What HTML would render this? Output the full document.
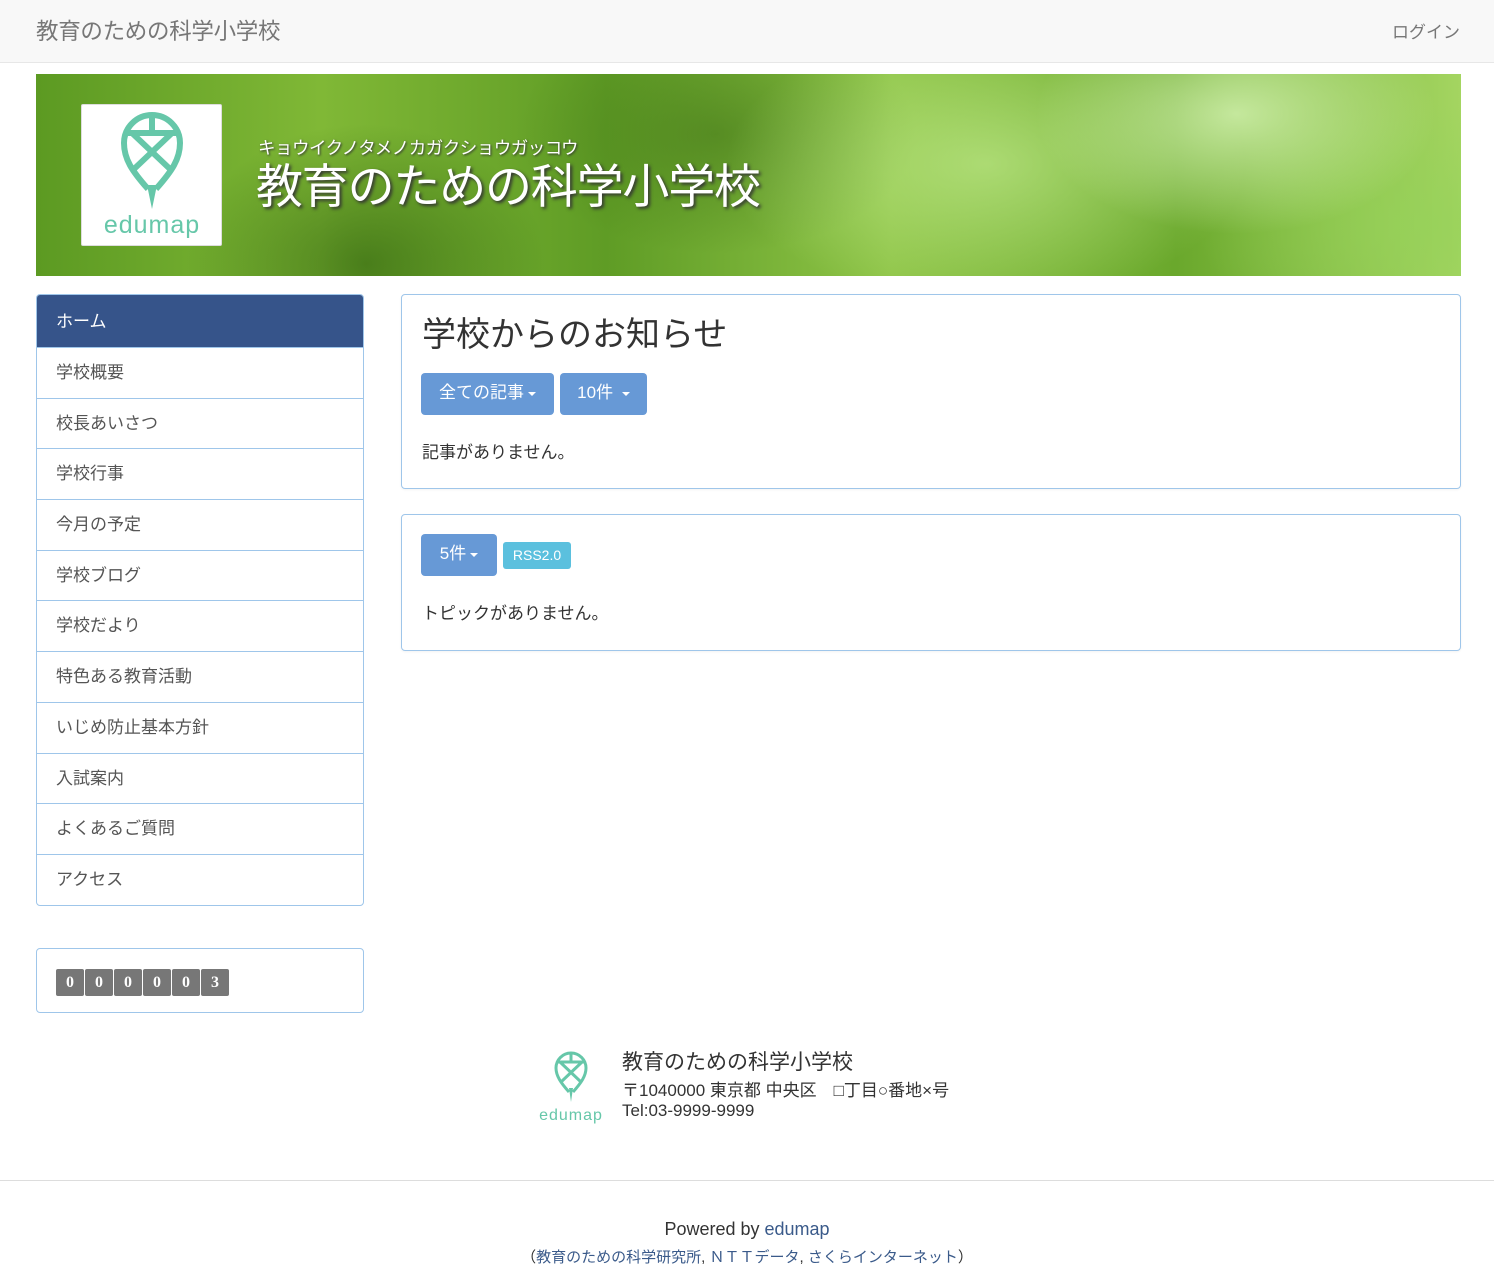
<!DOCTYPE html>
<html><head><meta charset="utf-8">
<style>
*{box-sizing:border-box;margin:0;padding:0}
body{width:1494px;height:1266px;background:#fff;font-family:"Liberation Sans","Noto Sans CJK JP",sans-serif;color:#333;position:relative;overflow:hidden}
.nav{position:absolute;left:0;top:0;width:1494px;height:63px;background:#f8f8f8;border-bottom:1px solid #e7e7e7}
.nav .brand{position:absolute;left:36px;top:14px;font-size:22.5px;color:#777;letter-spacing:-0.3px}
.nav .login{position:absolute;right:34px;top:18px;font-size:17px;color:#777}
.banner{position:absolute;left:36px;top:74px;width:1425px;height:202px;overflow:hidden;
background:
radial-gradient(ellipse 200px 120px at 1200px 40px,rgba(230,255,200,.7),transparent),
radial-gradient(ellipse 260px 140px at 950px 90px,rgba(200,240,150,.6),transparent),
radial-gradient(ellipse 180px 140px at 330px 190px,rgba(40,90,10,.6),transparent),
radial-gradient(ellipse 200px 120px at 680px 60px,rgba(60,110,20,.5),transparent),
radial-gradient(ellipse 220px 120px at 1380px 150px,rgba(150,210,90,.7),transparent),
linear-gradient(90deg,#5c9a22,#80b836 20%,#5f9c25 40%,#8ec447 60%,#6aa82c 80%,#a4d561)}
.logo{position:absolute;left:45px;top:30px;width:141px;height:142px;background:#fff;border:1px solid #ddd;border-radius:2px}
.kana{position:absolute;left:222px;top:61px;color:#fff;font-size:17.5px;letter-spacing:-0.5px;text-shadow:1px 1px 2px #333}
.title{position:absolute;left:220px;top:74px;color:#fff;font-size:47px;text-shadow:2px 2px 3px #333;letter-spacing:-1.2px}
.side{position:absolute;left:36px;top:294px;width:328px;border:1px solid #9fc6ea;border-radius:4px;overflow:hidden}
.side div{height:50.7px;border-top:1px solid #9fc6ea;padding:10px 19px;font-size:17px;color:#555}
.side div.home{height:52px;background:#36548a;color:#fff;border-top:none;padding-top:12px}
.counter{position:absolute;left:36px;top:948px;width:328px;height:65px;border:1px solid #9fc6ea;border-radius:4px}
.digits{position:absolute;left:19px;top:20px;display:flex;gap:1px}
.digits span{width:28px;height:27px;background:#777;color:#fff;font-family:"Liberation Serif",serif;font-weight:bold;font-size:16px;text-align:center;line-height:27px;border-radius:2px}
.panel{position:absolute;left:401px;width:1060px;border:1px solid #9fc6ea;border-radius:4px;box-shadow:0 1px 2px rgba(0,0,0,.05)}
.btn{position:absolute;height:42px;background:#6799d6;color:#fff;border-radius:4px;font-size:17px;line-height:40px;text-align:center}
.caret{display:inline-block;border-left:4px solid transparent;border-right:4px solid transparent;border-top:4px solid #fff;vertical-align:middle;margin-left:4px}
.rss{position:absolute;background:#5bc0de;color:#fff;font-size:14px;border-radius:3px;width:68px;height:27px;line-height:27px;text-align:center}
.foot{position:absolute;left:0;top:1180px;width:1494px;border-top:1px solid #ddd}
a{color:#3a5a8a;text-decoration:none}
</style></head><body>
<div class="nav"><div class="brand">教育のための科学小学校</div><div class="login">ログイン</div></div>
<div class="banner">
<div class="logo">
<svg width="141" height="142" viewBox="0 0 141 142">
<g fill="none" stroke="#66c7a9" stroke-width="6">
<path d="M66 84 C50 66 42 54 42 38 A28 28 0 1 1 98 38 C98 54 90 66 74 84"/>
<path d="M44 28 H96 M50 28 L88 64 M90 28 L52 64 M70 10 V28"/>
</g>
<path d="M65 80 L70 104 L75 80 Z" fill="#66c7a9"/>
<text x="70" y="128" text-anchor="middle" fill="#66c7a9" font-size="25" font-family="Liberation Sans,sans-serif" letter-spacing="1">edumap</text>
</svg></div>
<div class="kana">キョウイクノタメノカガクショウガッコウ</div>
<div class="title">教育のための科学小学校</div>
</div>
<div class="side">
<div class="home">ホーム</div><div>学校概要</div><div>校長あいさつ</div><div>学校行事</div><div>今月の予定</div><div>学校ブログ</div><div>学校だより</div><div>特色ある教育活動</div><div>いじめ防止基本方針</div><div>入試案内</div><div>よくあるご質問</div><div>アクセス</div>
</div>
<div class="counter"><div class="digits"><span>0</span><span>0</span><span>0</span><span>0</span><span>0</span><span>3</span></div></div>
<div class="panel" style="top:294px;height:195px">
<div style="position:absolute;left:20px;top:12px;font-size:34px;color:#333">学校からのお知らせ</div>
<div class="btn" style="left:19px;top:78px;width:133px">全ての記事<span class="caret"></span></div>
<div class="btn" style="left:158px;top:78px;width:87px">10件 <span class="caret"></span></div>
<div style="position:absolute;left:20px;top:143px;font-size:17px">記事がありません。</div>
</div>
<div class="panel" style="top:514px;height:137px">
<div class="btn" style="left:19px;top:19px;width:76px">5件<span class="caret"></span></div>
<div class="rss" style="left:101px;top:27px">RSS2.0</div>
<div style="position:absolute;left:20px;top:84px;font-size:17px">トピックがありません。</div>
</div>
<svg style="position:absolute;left:535px;top:1046px" width="74" height="80" viewBox="0 0 74 80">
<g fill="none" stroke="#66c7a9" stroke-width="3">
<path d="M34 46 C26 37 21 30 21 22 A15 15 0 1 1 51 22 C51 30 46 37 38 46"/>
<path d="M22 16 H50 M25 16 L46 36 M47 16 L26 36 M36 6 V16"/>
</g>
<path d="M34 42 L36 56 L38 42 Z" fill="#66c7a9"/>
<text x="36" y="74" text-anchor="middle" fill="#66c7a9" font-size="16" font-family="Liberation Sans,sans-serif" letter-spacing="1">edumap</text>
</svg>
<div style="position:absolute;left:622px;top:1046px;font-size:21px">教育のための科学小学校</div>
<div style="position:absolute;left:622px;top:1076px;font-size:17px">〒1040000 東京都 中央区　□丁目○番地×号</div>
<div style="position:absolute;left:622px;top:1101px;font-size:17px">Tel:03-9999-9999</div>
<div class="foot"></div>
<div style="position:absolute;left:0;top:1219px;width:1494px;text-align:center;font-size:18px">Powered by <a>edumap</a></div>
<div style="position:absolute;left:0;top:1246px;width:1494px;text-align:center;font-size:15px">（<a>教育のための科学研究所</a>, <a>ＮＴＴデータ</a>, <a>さくらインターネット</a>）</div>
</body></html>
